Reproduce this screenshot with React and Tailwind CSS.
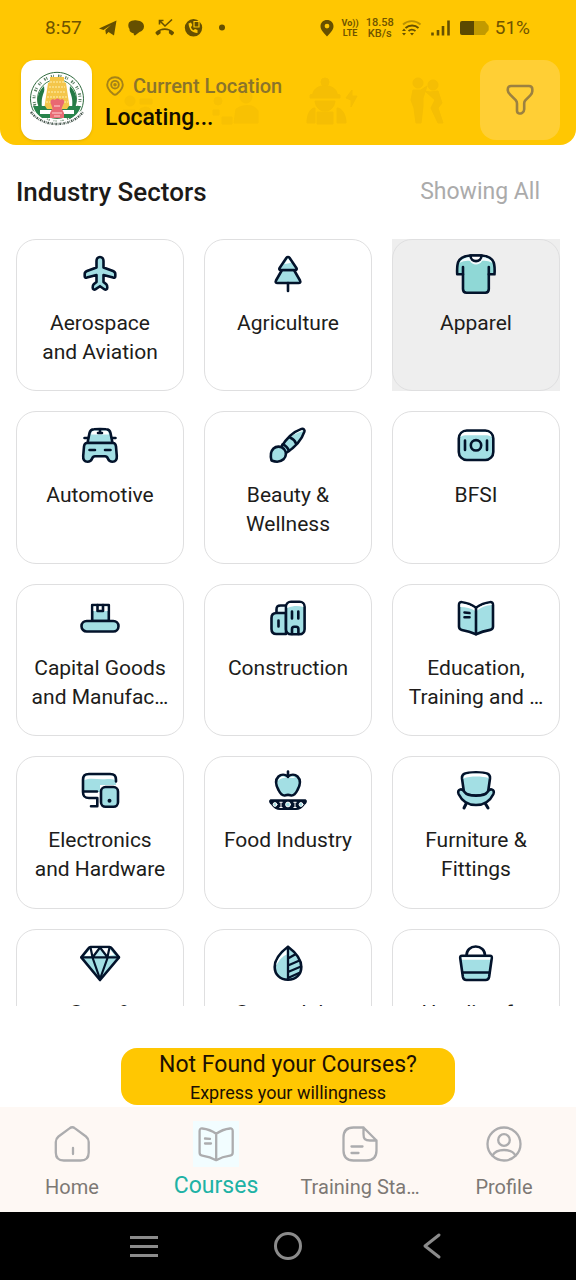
import React from "react";

const INK = "#03132b";
const AQUA = "#a3dfe4";

function SectorIcon({ children }) {
  return (
    <svg
      viewBox="0 0 40 40"
      className="h-10 w-10 shrink-0 overflow-visible"
      fill="none"
      stroke={INK}
      strokeWidth="2.6"
      strokeLinecap="round"
      strokeLinejoin="round"
      aria-hidden="true"
    >
      {children}
    </svg>
  );
}

const icons = {
  plane: (
    <path
      fill={AQUA}
      d="M20 3c-2.200 0-3.500 1.600-3.500 4v6.500L7 17c-1.500.6-2.300 1.600-2.300 3v2.300c0 1.300 1 1.800 2.200 1.300l9.600-2.600v7l-2.800 2.300c-1 .9-1 2-1 3.200 0 2 1.500 2.700 3 1.700l4.300-3 4.300 3c1.500 1 3 .3 3-1.700 0-1.200 0-2.300-1-3.200l-2.800-2.300v-7l9.600 2.600c1.200.5 2.200 0 2.200-1.300V20c0-1.400-.8-2.400-2.300-3l-9.500-3.500V7c0-2.400-1.300-4-3.500-4z"
    />
  ),
  tree: (
    <>
      <path fill={AQUA} d="M14 16 8 26.500c-.8 1.500-.2 2.500 1.500 2.500h21c1.700 0 2.300-1 1.500-2.500L26 16z" />
      <path fill={AQUA} d="M18.500 3.800 11.600 14c-.7 1.200-.3 2 1 2h14.800c1.300 0 1.700-.8 1-2L21.500 3.800c-.8-1.100-2.200-1.100-3 0z" />
      <path fill="#fff" stroke="none" d="M20 4.500 16.500 10c2.500-.3 4.500-.8 6.500-1.300z" />
      <path d="M20 29v8" />
    </>
  ),
  shirt: (
    <>
      <path fill="#8fd8d6" d="M14 1.500C8 2 3.500 4 2 8.500 1 12 1 16 1.200 20.300H7V35c0 2.500 1 3.700 3.500 3.700h18.800c2.500 0 3.500-1.200 3.500-3.700V20.300h5.700c.3-4.300.3-8.300-.8-11.800C36.200 4 31.800 2 25.800 1.500z" />
      <path fill="#f3fbfd" stroke="none" d="M3.500 9C5 5.500 9 3.500 14 3l12 .1c5 .4 9 2.400 10.300 6C33 7 29 6.500 26 7c-2 4.500-10 4.500-12 0-3.500-.5-7 0-10.500 2z" />
      <path fill="#fff" d="M14.500 1.500c0 7.500 11 7.500 11 0z" />
      <path d="M7 13v7.300M32.800 13v7.300" />
    </>
  ),
  car: (
    <>
      <path fill={AQUA} d="M7.500 17 9.500 7c.6-2.800 2-3.600 4.500-3.700 4-.3 8-.3 12 0 2.500.1 4 .9 4.500 3.700l2 10z" />
      <path fill="#fff" stroke="none" d="M11 8.500 11.500 7c.5-1.800 1.300-2.200 3-2.300h11c1.800 0 2.500.5 3 2.300l.4 1.500z" />
      <path fill={AQUA} d="M7 17h26c2.300 0 2.800 1.500 3 3.500l.8 9.500c.3 3.500-1.300 5.800-4.300 5.800-2.500 0-3.700-1-4.500-3-.7-1.800-1.200-2.500-3-2.500H15c-1.800 0-2.300.7-3 2.500-.8 2-2 3-4.500 3-3 0-4.600-2.300-4.300-5.800L4 20.500c.2-2 .7-3.500 3-3.500z" />
      <path d="M4.500 12H8M32 12h3.500M9.500 24H15M25 24h5.500M18 7h4M20 4.500V7" />
    </>
  ),
  brush: (
    <>
      <path fill={AQUA} d="M12.500 22C18 12.500 26 5.500 33.500 2.900c2-.6 3.500.8 2.900 2.800C34 13 27 21.500 17.500 27.500z" />
      <path fill="#fff" stroke="none" d="M22 11.500c4-3.600 8-6 11.500-7.200.9-.3 1.400.2 1.200 1-3.500.5-7.700 2.700-12.700 6.200z" />
      <path d="M22 11.500c3 1.200 5 3.200 6 6" />
      <path d="M14.500 18.500c3.300 1 5.500 3.500 6.500 6.500" />
      <path fill={AQUA} d="M3.500 34.500C2.300 30 2.500 25.500 5.500 22.500c3-2.700 7.700-2.400 10.500.5 2.700 3 2.500 7.500-.5 10.300-3 2.700-7.500 3-12 1.200z" />
    </>
  ),
  banknote: (
    <>
      <rect x="2.800" y="4.500" width="34.500" height="29.500" rx="8" fill={AQUA} />
      <path fill="#fff" stroke="none" d="M4.500 11c.6-3.500 2.500-5 6.500-5h18c4 0 6 1.500 6.500 5-2-1.700-4-1.700-7-1.700h-17c-3 0-5 0-7 1.700z" />
      <circle cx="20" cy="19.300" r="5.200" />
      <path d="M9 14.500v9.500M31 14.500v9.500" />
    </>
  ),
  goods: (
    <>
      <rect x="12.200" y="6" width="16.600" height="16" fill={AQUA} />
      <path fill="#fff" stroke="none" d="M13.500 7.300h14V12h-14z" />
      <path d="M17.500 6v6h5.500V6" />
      <rect x="1.500" y="22" width="37" height="10.500" rx="5.200" fill={AQUA} />
    </>
  ),
  building: (
    <>
      <path fill="#e5f7fa" d="M8.500 15v-4.500c0-3 1-4 4-4H19V15z" />
      <path fill={AQUA} d="M18 14H8.500c-3.500 0-5 1.500-5 5v11c0 3.500 1.500 5 5 5H18z" />
      <rect x="18" y="2.800" width="18.600" height="32.400" rx="5" fill={AQUA} />
      <path fill="#fff" stroke="none" d="M19.300 9c0-3.500 1-5 4-5h8c3 0 4 1.500 4 4-5-1.500-10-1.500-16 1z" />
      <path d="M10.500 21.500v6M24 12.500v7M30.300 12.500v7M24 35v-5c0-1.500.7-2.200 2.200-2.200h2c1.500 0 2.200.7 2.200 2.200v5" />
    </>
  ),
  book: (
    <>
      <path fill={AQUA} d="M20 8.700C15.500 5.500 11 3.700 6 3.200c-2-.2-3 .8-3 2.800v21.500c0 2 .8 3 2.800 3.400 5 .9 9.700 2.300 14.200 4.300 4.500-2 9.200-3.400 14.200-4.300 2-.4 2.800-1.400 2.800-3.400V6c0-2-1-3-3-2.800-5 .5-9.500 2.300-14 5.500z" />
      <path fill="#fff" stroke="none" d="M4.300 8V6c0-1.200.5-1.600 1.700-1.500 5 .6 9.500 2.400 14 5.700 4.500-3.300 9-5.100 14-5.700 1.200-.1 1.700.3 1.700 1.500-6 .3-11 2.500-15.700 6.500C15 9 10 8 4.300 8z" />
      <path d="M20 8.700v26.500M8.500 13.500l5 .5M8.500 18.200h5" />
    </>
  ),
  devices: (
    <>
      <path fill={AQUA} stroke="none" d="M3 20V9c0-4.500 1.500-6 6-6h21c4.500 0 6 1.500 6 6v5H20v7H3z" />
      <path fill="#fff" stroke="none" d="M4.300 9c.3-3.500 1.700-4.700 5-4.700h20.500c3.500 0 4.800 1.200 5 4.700-3-1.300-6-1.200-10-.8-7 .6-14-2-20.500.8z" />
      <path d="M36 10.500V9c0-4.500-1.500-6-6-6H9C4.500 3 3 4.500 3 9v12c0 4.500 1.500 6 6 6h8.300v8M3.500 20.500H17M11 35.200h6.300" />
      <rect x="21" y="16" width="17" height="19.800" rx="4.500" fill={AQUA} />
      <circle cx="29.500" cy="29.800" r="1.100" fill={INK} strokeWidth="1.800" />
    </>
  ),
  food: (
    <>
      <path fill={AQUA} d="M20 5.500c-3-2.300-7-2.300-9.500 0-3.500 3.500-2.500 9 0 13.500 2 4 4.500 6 7 5.300 1.500-.5 3.500-.5 5 0 2.500.7 5-1.300 7-5.300 2.500-4.500 3.500-10 0-13.500-2.500-2.300-6.500-2.300-9.500 0z" />
      <path fill="#fff" stroke="none" d="M10 10c1-4 4-5.500 8-3.500 3-.5 6-1.500 9.500.2C22 7.500 14 5 10 10z" />
      <path d="M20 6V.5" />
      <path fill={INK} strokeWidth="1.500" d="M2.500 29h35c1.500 1 .5 3-1.500 4.500-2 3-4 4.700-8 4.700H12c-4 0-6-1.700-8-4.700-2-1.500-3-3.500-1.500-4.500z" />
      <g fill={AQUA} stroke="#fff" strokeWidth="1">
        <circle cx="7" cy="33.500" r="1.900" />
        <circle cx="20" cy="33.500" r="2.400" />
        <circle cx="33" cy="33.500" r="1.900" />
        <path d="M13 31.500v5M27 31.500v5M11.800 31.300h2.400M25.800 31.300h2.400M11.800 36.500h2.400M25.800 36.500h2.400" />
      </g>
    </>
  ),
  chair: (
    <>
      <path strokeWidth="3" d="m10.500 32-2.500 5M29 32l3 5" />
      <path fill={AQUA} d="M8 21.500 6 7.500C5.500 3 8.500 1.200 20 1.200S34.500 3 34 7.500l-2 14c-3 4-21 4-24 0z" />
      <path fill="#fff" stroke="none" d="M7.500 7.500C7.500 4 10 2.600 20 2.600s12.500 1.400 12.500 4.500C26 5 14 5 7.500 7.500z" />
      <path fill={AQUA} d="M4.300 18.500c2-.5 3 .5 4 2.200 2 3 5.700 4 11.700 4s9.700-1 11.700-4c1-1.700 2-2.700 4-2.200 2.200.6 2.600 2.500 1.600 4.700C34 30 28.500 34 20 34S6 30 2.700 23.200c-1-2.200-.6-4.100 1.600-4.700z" />
    </>
  ),
  diamond: (
    <>
      <path fill={AQUA} d="M10.500 3h19c1 0 1.500.4 2 1.100l7.500 9.300L20 36 1.300 13.400 8.700 4.100c.5-.7 1-1.100 1.800-1.100z" />
      <path fill="#fff" stroke="none" d="M11 4.300h8l-5.500 7.500-9 .3zM21.500 4.300H29l5.500 6.700-8.500 1z" />
      <path fill="#bde9f2" stroke="none" d="m20 4.500 6.500 8.500h-13z" />
      <path strokeWidth="2.200" d="M1.500 13.400H39M20 3.500l-7.500 10L20 35l7.700-21.500zM10.500 3.500l2 9.500M29.500 3.500l-2 9.500" />
    </>
  ),
  leaf: (
    <>
      <path fill={AQUA} d="M20 2.800C11 9.500 6.700 16.500 6.700 23c0 7.500 5.300 12.700 13.300 12.700S33.300 30.500 33.300 23C33.300 16.500 29 9.500 20 2.800z" />
      <path fill="#fff" stroke="none" d="M18.700 5.500C12.500 11 8.500 16.500 8 22c3-6 7-10 10.700-11.500z" />
      <path strokeWidth="2.300" d="M20 3v32.500M20 14.500l7-4M20 21.500l11.500-5M20 28l13-5.500M20 34l11-5" />
    </>
  ),
  bag: (
    <>
      <path d="M10.500 11.500c0-5.500 4-9 9.200-9s9.300 3.500 9.300 9" />
      <path fill={AQUA} d="M6 11.800h28c1.400 0 2 .8 1.800 2.200l-2.700 19c-.4 2.200-1.400 3-3.500 3H10.400c-2.100 0-3.100-.8-3.500-3L4.200 14c-.2-1.400.4-2.200 1.800-2.200z" />
      <path fill="#fff" stroke="none" d="M5.700 13.200h28.800l-.4 2.600H6z" />
      <path d="M6.500 28.500h27" />
    </>
  ),
};

const sectors = [
  { icon: "plane", lines: ["Aerospace", "and Aviation"] },
  { icon: "tree", lines: ["Agriculture"] },
  { icon: "shirt", lines: ["Apparel"], pressed: true },
  { icon: "car", lines: ["Automotive"] },
  { icon: "brush", lines: ["Beauty &", "Wellness"] },
  { icon: "banknote", lines: ["BFSI"] },
  { icon: "goods", lines: ["Capital Goods", "and Manufac…"] },
  { icon: "building", lines: ["Construction"] },
  { icon: "book", lines: ["Education,", "Training and …"] },
  { icon: "devices", lines: ["Electronics", "and Hardware"] },
  { icon: "food", lines: ["Food Industry"] },
  { icon: "chair", lines: ["Furniture &", "Fittings"] },
  { icon: "diamond", lines: ["Gem &", "Jewellery"] },
  { icon: "leaf", lines: ["Green Jobs"] },
  { icon: "bag", lines: ["Handicrafts"] },
];

function SectorCard({ icon, lines, pressed }) {
  return (
    <div className={pressed ? "bg-[#eeeeee]" : ""}>
      <button
        type="button"
        className="flex aspect-[54/49] w-full flex-col items-center gap-[15px] rounded-[20px] border border-[#dfdfe0] pt-3.5 text-center"
      >
        <SectorIcon>{icons[icon]}</SectorIcon>
        <span className="text-[21px] leading-[29px] whitespace-nowrap text-[#201c1a]">
          {lines.map((line) => (
            <span key={line} className="block">
              {line}
            </span>
          ))}
        </span>
      </button>
    </div>
  );
}

function StatusBar() {
  return (
    <div className="flex h-14 items-center justify-between pr-[46px] pl-[45px] text-[#705400]">
      <div className="flex items-center">
        <span className="text-[19px]">8:57</span>
        <svg viewBox="0 0 132 20" className="ml-4 h-5 w-[132px]" fill="#665000" aria-hidden="true">
          <path d="M1 10.500 18.500 2.500 16 17.500l-5.500-3.500-2.500 2.500-.7-4.500L13 7l-7.500 5z" />
          <path d="M31 4.500c2-2 5-2.500 8-2 4 .2 7 2.500 7 6 0 3.200-2 4.500-4.500 5.500l-4.500 3.500c-1-.3-1.500-1-1.300-2.200C32 14.500 31.500 13 31.500 11c-1.500-2-1.500-4.500-.5-6.500z" />
          <path d="M58 16c-.7-.8-.7-1.500 0-2.200 5-4.700 12.500-4.700 17.500 0 .7.700.7 1.400 0 2.200l-1.600 1.500-3-2.300v-2.700c-2.500-.8-5.700-.8-8.300 0v2.700l-3 2.300z" />
          <path d="m62 3 5 5 7-6.500M61.500 6.500V2.500h4" fill="none" stroke="#665000" strokeWidth="1.600" />
          <circle cx="95.500" cy="9.800" r="8.700" />
          <path d="M90.500 5.500c1 7 3.500 9 9 9.500v-3l-2.500-1-1.500 1.200c-1.300-.7-2-1.700-2.500-3L94.300 7 93 4.500z" fill="#ffc702" />
          <path d="M96 3.500h5v5.500h-5z" fill="none" stroke="#ffc702" strokeWidth="1.200" />
          <circle cx="124" cy="9.500" r="3" />
        </svg>
      </div>
      <div className="flex items-center">
        <svg viewBox="0 0 14 18" className="h-[18px] w-3.5" fill="#665000" fillRule="evenodd" aria-hidden="true">
          <path d="M7 1C3.300 1 .5 3.700.5 7.200.5 11 4 14 7 17.500 10 14 13.500 11 13.500 7.200 13.500 3.700 10.700 1 7 1zm0 3.700a2.400 2.400 0 1 1 0 4.800 2.400 2.400 0 0 1 0-4.800z" />
        </svg>
        <span className="ml-2 text-center text-[9px] leading-[10px] font-bold">
          Vo))
          <br />
          LTE
        </span>
        <span className="ml-[7px] text-center text-[11px] leading-[11px] font-medium">
          <span className="block">18.58</span>
          <span className="block">KB/s</span>
        </span>
        <svg viewBox="0 0 48 20" className="ml-2 h-5 w-12" fill="none" stroke="#665000" strokeWidth="1.900" aria-hidden="true">
          <path d="M1 6.500c5-4.500 12.500-4.500 17.500 0" opacity=".45" />
          <path d="M3.500 10c3.800-3.300 9.500-3.300 13 0M6.500 13c2-1.700 4.700-1.700 7 0" />
          <path d="m8 15 2 2.500 2-2.500zM0 13l2-2.500L4 13zM0 15l2 2.500L4 15z" fill="#665000" stroke="none" />
          <path d="M30.500 17.500v-3M36 17.500V12M41 17.500V8M46.500 17.500V2.500" strokeWidth="2.600" />
        </svg>
        <svg viewBox="0 0 29 14" className="ml-2.5 h-3.5 w-[29px]" aria-hidden="true">
          <path d="M13 0h11c1 0 1.500.5 1.800 1.500L28 4c.6.600.7 1 .7 1.800v2.400c0 .8-.1 1.200-.7 1.800l-2.200 2.500C25.500 13.500 25 14 24 14H13z" fill="#c29a00" />
          <path d="M2 0h12v14H2a2 2 0 0 1-2-2V2a2 2 0 0 1 2-2z" fill="#5c4900" />
        </svg>
        <span className="ml-1.5 text-[19px]">51%</span>
      </div>
    </div>
  );
}

function HeaderPattern() {
  return (
    <svg viewBox="0 0 340 50" className="absolute bottom-[18px] left-[118px] h-[50px] w-[340px]" fill="#f5be04" stroke="#f5be04" aria-hidden="true">
      <g opacity=".6">
        <circle cx="12" cy="24" r="5" />
        <path d="M5 33h12v10H5zM22 22h12v5H22zM22 32c6-3 10-2 12 3v7H20z" />
        <circle cx="100" cy="24" r="4" />
        <circle cx="128" cy="20" r="6" />
        <path d="M95 33h6v5h-6zM118 32c8-5 18-5 22 2v12h-24zM104 40h10v7h-10z" />
      </g>
      <circle cx="207" cy="5" r="4" />
      <path d="M195 17c1-11 23-11 24 0l3 1v3h-30v-3zM197 24h20c-1 6-4 10-10 10s-9-4-10-10zM189 46c0-8 3-15 8-15v15zM219 46V31c5 0 9 7 9 15zM199 35h16v12h-16zM228 21l6-8v6h5l-6 11v-7z" />
      <circle cx="300" cy="6" r="5" />
      <circle cx="315" cy="8" r="5" />
      <path d="M295 13h8l6-4-4 12v8l-2 17h-5l-2-15-3-8zM312 15l8-1 4 12-4 5 5 15h-5l-7-15 4-8-10-9z" />
    </svg>
  );
}

function Emblem() {
  return (
    <svg viewBox="0 0 60 60" className="h-[60px] w-[60px]" fill="none" aria-hidden="true">
      <path d="M7 42A26.500 26.500 0 1 1 53 42" stroke="#2f6a3d" strokeWidth="1" />
      <circle cx="30" cy="29" r="23" stroke="#5b8063" strokeWidth="3" strokeDasharray="1.200 1 .8 4.200 1.500 1 1 3.800" />
      <circle cx="30" cy="29" r="19.500" stroke="#438352" strokeWidth="1" />
      <path d="M12 37c-3-8-1-15 5-21l2 21zM48 37c3-8 1-15-5-21l-2 21z" fill="#247a45" />
      <path d="M15 38c-1-8 0-14 6-24h18c6 10 7 16 6 24z" fill="#fff" />
      <path d="M23 7h14v5l2 1 4 27H17l4-27 2-1z" fill="#f4c64a" />
      <path d="M23 12h14M22 17h16M21 22h18M20 27h20M19 32h22" stroke="#fff0b0" strokeWidth="1" strokeDasharray="2 1" />
      <path d="M6 36h12l2 3h20l2-3h12c-2 6-5 9-9 12H15c-4-3-7-6-9-12z" fill="#27834b" />
      <path d="M13 40h34v4H13z" fill="#fff" />
      <path d="M24 34c-2-4 2-6 4-4 1-2 4-2 5 0 3-2 6 1 3 5l-2 5H26z" fill="#e96872" />
      <path d="M25 39h10l2 4v5H23v-5z" fill="#e86b74" />
      <path d="M27 36h6M25 43h10M27 46h6" stroke="#ffd6d6" />
      <path d="M4 42c12 16 40 16 52 0" stroke="#fff" strokeWidth="5" />
      <path d="M4 42c12 16 40 16 52 0" stroke="#42534a" strokeWidth="2.400" strokeDasharray="1.500 .8 .7 1" />
    </svg>
  );
}

function Header() {
  return (
    <header className="relative shrink-0 rounded-b-2xl bg-[#ffc702] pb-[5px]">
      <HeaderPattern />
      <StatusBar />
      <div className="relative mt-1 flex items-center pr-4 pl-[21px]">
        <div className="flex h-20 w-[71px] shrink-0 items-center justify-center rounded-[14px] bg-white shadow-sm">
          <Emblem />
        </div>
        <div className="ml-[13px] min-w-0 flex-1 pt-1">
          <div className="flex items-center gap-2 text-[20px] leading-8 font-medium text-[#8b742b]">
            <svg viewBox="0 0 20 20" className="h-5 w-5" fill="none" stroke="#a58318" strokeWidth="1.900" aria-hidden="true">
              <path d="M10 1.200c-4.500 0-7.800 3.200-7.800 7.500 0 4.500 3.800 7.300 6 9.300 1.200 1 2.400 1 3.600 0 2.200-2 6-4.800 6-9.300 0-4.300-3.300-7.500-7.800-7.500z" />
              <circle cx="10" cy="8.700" r="3.800" />
              <circle cx="10" cy="8.700" r=".8" />
            </svg>
            Current Location
          </div>
          <div className="text-[23px] leading-8 font-medium text-[#120d00]">Locating...</div>
        </div>
        <button
          type="button"
          aria-label="Filter"
          className="flex size-20 shrink-0 items-center justify-center rounded-2xl bg-[#ffcf35]"
        >
          <svg viewBox="0 0 28 32" className="h-8 w-7" fill="none" stroke="#9c8140" strokeWidth="2.600" strokeLinejoin="round" aria-hidden="true">
            <path d="M5 2h18c2.200 0 3.300 1.200 3.300 3.300v2c0 1.700-.8 2.900-2 4.100l-5 5c-.8.900-1.100 1.600-1.100 2.900v6c0 1.600-.6 2.700-2 3.500-2.300 1.300-5.200 1-5.200-2.300v-7c0-1.500-.4-2.300-1.300-3.300l-5-5.100C3.100 9.600 1.800 8.500 1.800 6.500V5.300C1.800 3.200 2.900 2 5 2z" />
          </svg>
        </button>
      </div>
    </header>
  );
}

const navItems = [
  {
    label: "Home",
    icon: (
      <path d="M15.500 2.400c1.700-1.400 3.800-1.400 5.500 0L32 10.500c1.800 1.500 2.700 3 2.700 5.500v10.500c0 5.500-2.500 8-8 8H9.800c-5.500 0-8-2.500-8-8V16c0-2.500.9-4 2.700-5.500zM19 22v6" />
    ),
  },
  {
    label: "Courses",
    active: true,
    icon: (
      <path d="M18.200 7.800C14 4.700 9.500 3 4.300 2.500c-1.800-.2-2.700.7-2.700 2.500v21.500c0 2 .8 2.900 2.700 3.200 5 .7 9.500 2 13.900 4.500 4.400-2.500 8.800-3.800 13.800-4.500 1.900-.3 2.700-1.200 2.700-3.200V5c0-1.800-.9-2.700-2.700-2.500-5 .5-9.600 2.200-13.800 5.300zm0 0v26M7 12.500l5 .4M7 17.500h6" />
    ),
  },
  {
    label: "Training Sta…",
    icon: (
      <path d="M21.500 1.500h-10c-7 0-10 3-10 10v13c0 7 3 10 10 10h13c7 0 10-3 10-10v-10zm0 0v6.500c0 5 1.500 6.500 6.500 6.500h6.500M9.500 20.500h11M9.500 27h7" />
    ),
  },
  {
    label: "Profile",
    icon: (
      <>
        <circle cx="18" cy="18" r="16.500" />
        <circle cx="18" cy="14" r="5.800" />
        <path d="M6.500 29.500C8.500 25.800 12.500 24 18 24s9.500 1.800 11.500 5.500" />
      </>
    ),
  },
];

function BottomNav() {
  return (
    <nav aria-label="Main" className="grid h-[105px] shrink-0 grid-cols-4 bg-[#fef8f4] pt-3.5">
      {navItems.map(({ label, icon, active }) => (
        <a key={label} href={"#" + label.slice(0, 4).toLowerCase()} aria-current={active ? "page" : undefined} className="flex flex-col items-center gap-1">
          <span className={active ? "bg-[#f2fdff] p-[5px]" : "p-[5px]"}>
            <svg viewBox="0 0 36 36" className="size-9" fill="none" stroke="#acacae" strokeWidth="2.300" strokeLinecap="round" strokeLinejoin="round" aria-hidden="true">
              {icon}
            </svg>
          </span>
          <span className={active ? "text-[23px] leading-[30px] whitespace-nowrap text-[#20b2a5]" : "text-[20px] leading-8 whitespace-nowrap text-[#7d7874]"}>
            {label}
          </span>
        </a>
      ))}
    </nav>
  );
}

function SystemNav() {
  const shared = {
    viewBox: "0 0 30 30",
    className: "size-[30px]",
    fill: "none",
    stroke: "#8b8b8b",
    strokeWidth: 3,
    strokeLinecap: "round",
    strokeLinejoin: "round",
    "aria-hidden": true,
  };
  return (
    <div className="grid h-[68px] shrink-0 grid-cols-3 place-items-center bg-black px-[12.5%]">
      <button type="button" aria-label="Recent apps">
        <svg {...shared} strokeLinecap="butt">
          <path d="M1 6.500h28M1 15.500h28M1 24.500h28" />
        </svg>
      </button>
      <button type="button" aria-label="Home screen">
        <svg {...shared}>
          <circle cx="15" cy="15" r="12.500" />
        </svg>
      </button>
      <button type="button" aria-label="Back">
        <svg {...shared}>
          <path d="M22 4 8 15l14 11" />
        </svg>
      </button>
    </div>
  );
}

export default function App() {
  return (
    <div className="flex h-screen flex-col bg-white font-['Roboto',sans-serif]">
      <Header />
      <main className="flex min-h-0 flex-1 flex-col">
        <div className="flex h-[94px] shrink-0 items-center justify-between pr-9 pl-4">
          <h1 className="text-[26px] leading-8 font-medium text-[#1c1a18]">Industry Sectors</h1>
          <span className="text-[23px] leading-8 text-[#ababab]">Showing All</span>
        </div>
        <div className="min-h-0 flex-1 overflow-y-auto px-4 [scrollbar-width:none]">
          <div className="grid grid-cols-3 gap-5">
            {sectors.map((sector) => (
              <SectorCard key={sector.icon} {...sector} />
            ))}
          </div>
        </div>
        <button
          type="button"
          className="mx-auto mt-[42px] mb-0.5 flex w-[58%] shrink-0 flex-col items-center rounded-2xl bg-[#ffc702] pt-px text-[#1c1003]"
        >
          <span className="text-[23px] leading-8">Not Found your Courses?</span>
          <span className="text-[18px] leading-6">Express your willingness</span>
        </button>
      </main>
      <BottomNav />
      <SystemNav />
    </div>
  );
}
